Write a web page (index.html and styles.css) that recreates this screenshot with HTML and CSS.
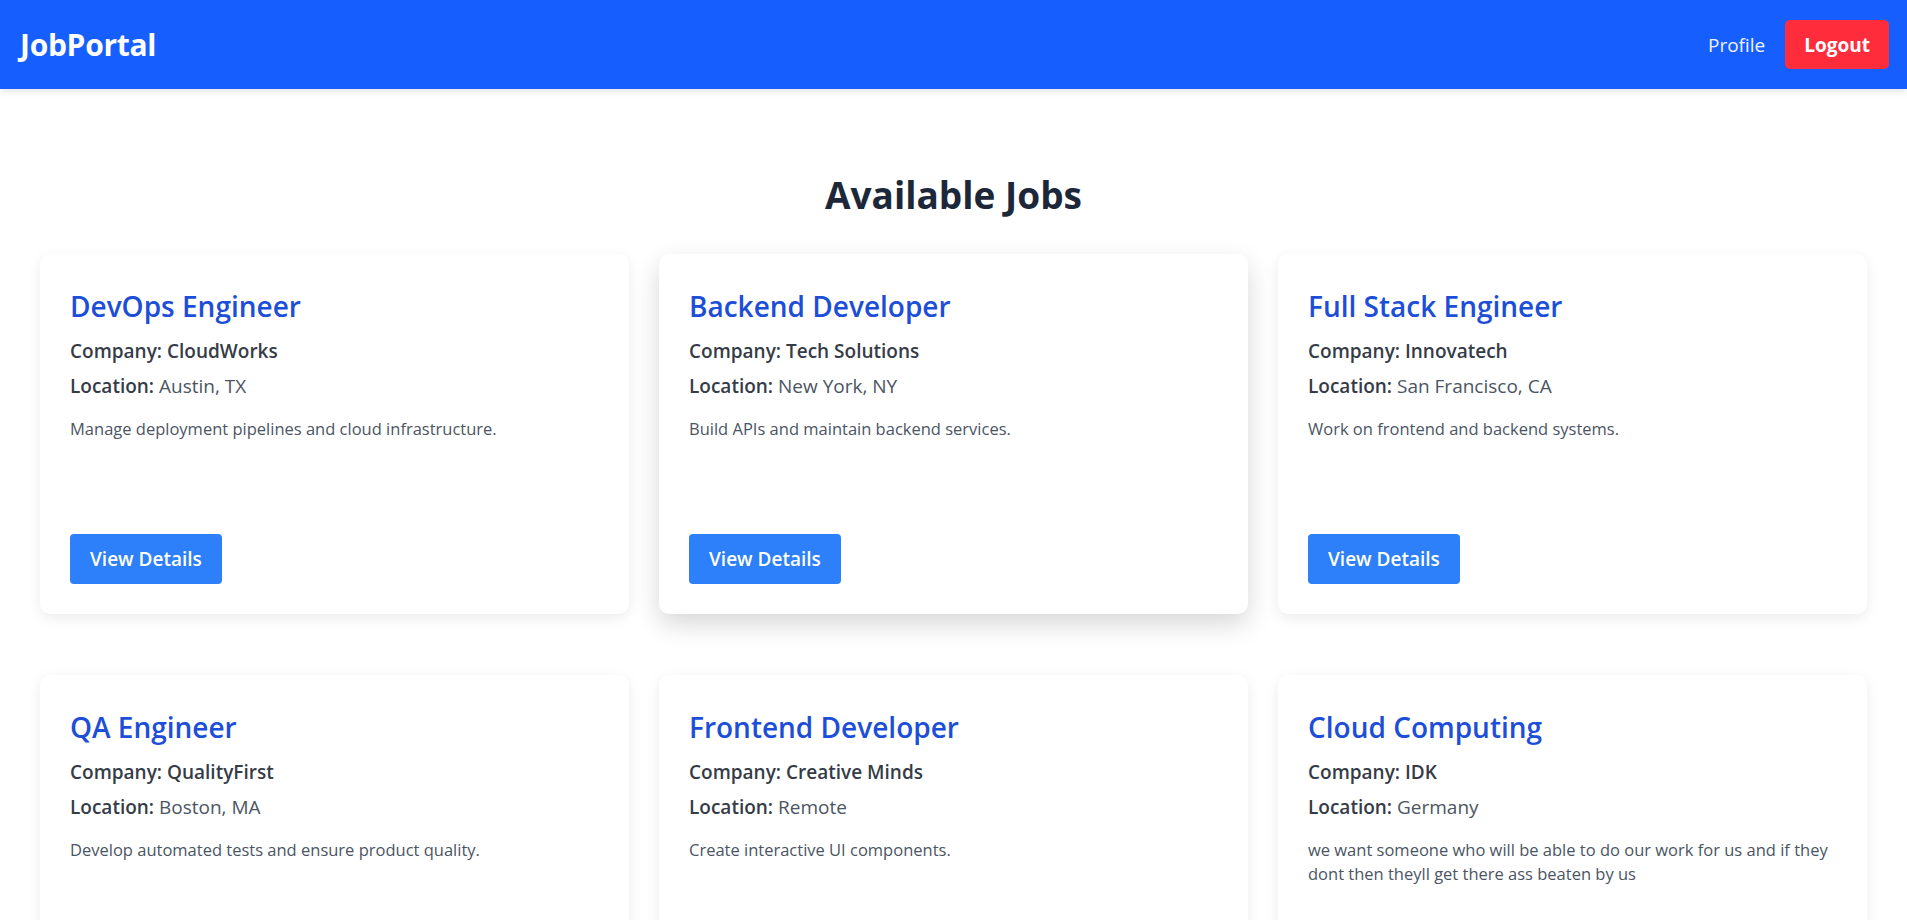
FILE: index.html
```html
<!DOCTYPE html>
<html lang="en">
<head>
<meta charset="utf-8">
<title>JobPortal</title>
<link rel="stylesheet" href="styles.css">
</head>
<body>
<header class="navbar">
  <div class="brand">JobPortal</div>
  <nav class="nav-links">
    <a class="nav-link" href="#">Profile</a>
    <button class="btn-logout">Logout</button>
  </nav>
</header>
<main class="page">
  <h2 class="page-title">Available Jobs</h2>
  <div class="job-grid">
    <div class="job-card">
      <h3 class="job-title">DevOps Engineer</h3>
      <p class="job-company">Company: CloudWorks</p>
      <p class="job-location"><strong>Location:</strong> Austin, TX</p>
      <p class="job-desc">Manage deployment pipelines and cloud infrastructure.</p>
      <button class="btn-view">View Details</button>
    </div>
    <div class="job-card job-card-hover">
      <h3 class="job-title">Backend Developer</h3>
      <p class="job-company">Company: Tech Solutions</p>
      <p class="job-location"><strong>Location:</strong> New York, NY</p>
      <p class="job-desc">Build APIs and maintain backend services.</p>
      <button class="btn-view">View Details</button>
    </div>
    <div class="job-card">
      <h3 class="job-title">Full Stack Engineer</h3>
      <p class="job-company">Company: Innovatech</p>
      <p class="job-location"><strong>Location:</strong> San Francisco, CA</p>
      <p class="job-desc">Work on frontend and backend systems.</p>
      <button class="btn-view">View Details</button>
    </div>
    <div class="job-card">
      <h3 class="job-title">QA Engineer</h3>
      <p class="job-company">Company: QualityFirst</p>
      <p class="job-location"><strong>Location:</strong> Boston, MA</p>
      <p class="job-desc">Develop automated tests and ensure product quality.</p>
      <button class="btn-view">View Details</button>
    </div>
    <div class="job-card">
      <h3 class="job-title">Frontend Developer</h3>
      <p class="job-company">Company: Creative Minds</p>
      <p class="job-location"><strong>Location:</strong> Remote</p>
      <p class="job-desc">Create interactive UI components.</p>
      <button class="btn-view">View Details</button>
    </div>
    <div class="job-card">
      <h3 class="job-title">Cloud Computing</h3>
      <p class="job-company">Company: IDK</p>
      <p class="job-location"><strong>Location:</strong> Germany</p>
      <p class="job-desc">we want someone who will be able to do our work for us and if they dont then theyll get there ass beaten by us</p>
      <button class="btn-view">View Details</button>
    </div>
  </div>
</main>
</body>
</html>
```

FILE: styles.css
```css
html {
  scrollbar-width: none;
}
html::-webkit-scrollbar {
  display: none;
}
* {
  box-sizing: border-box;
}
body {
  margin: 0;
  font-family: "Open Sans", "Noto Sans", sans-serif;
  background: #ffffff;
  color: #374151;
}
.navbar {
  height: 89px;
  background: #175efe;
  display: flex;
  align-items: center;
  justify-content: space-between;
  padding: 0 18px 0 20px;
  box-shadow: 0 2px 8px rgba(0, 0, 0, 0.12);
  position: relative;
  z-index: 2;
}
.brand {
  color: #ffffff;
  font-size: 30px;
  font-weight: 700;
  letter-spacing: -0.3px;
}
.nav-links {
  display: flex;
  align-items: center;
  gap: 20px;
}
.nav-link {
  color: #eef3ff;
  text-decoration: none;
  font-size: 19px;
}
.btn-logout {
  font-family: inherit;
  background: #ff2d3b;
  color: #ffffff;
  border: none;
  border-radius: 5px;
  font-size: 19px;
  font-weight: 700;
  height: 49px;
  padding: 0 19px;
}
.page {
  padding: 82px 40px 40px;
}
.page-title {
  margin: 0 0 35px;
  text-align: center;
  font-size: 37px;
  line-height: 48px;
  font-weight: 700;
  color: #1c2739;
}
.job-grid {
  display: grid;
  grid-template-columns: repeat(3, 1fr);
  column-gap: 30px;
  row-gap: 61px;
}
.job-card {
  background: #ffffff;
  border-radius: 10px;
  box-shadow: 0 4px 14px rgba(0, 0, 0, 0.08);
  padding: 30px;
  min-height: 360px;
  display: flex;
  flex-direction: column;
  align-items: flex-start;
}
.job-card-hover {
  box-shadow: 0 10px 26px rgba(0, 0, 0, 0.16);
}
.job-title {
  margin: 4px 0 14px;
  font-size: 28px;
  line-height: 36px;
  font-weight: 600;
  color: #1d4ed8;
}
.job-company {
  margin: 0 0 8px;
  font-size: 19px;
  line-height: 27px;
  font-weight: 600;
  color: #353c47;
}
.job-location {
  margin: 0 0 17px;
  font-size: 19px;
  line-height: 27px;
  color: #4b5563;
}
.job-location strong {
  font-weight: 600;
  color: #353c47;
}
.job-desc {
  margin: 0;
  font-size: 16.5px;
  line-height: 24px;
  color: #4b5563;
}
.btn-view {
  margin-top: auto;
  font-family: inherit;
  background: #2d7ffa;
  color: #ffffff;
  border: none;
  border-radius: 4px;
  height: 50px;
  padding: 0 20px;
  font-size: 19px;
  font-weight: 600;
}
```
